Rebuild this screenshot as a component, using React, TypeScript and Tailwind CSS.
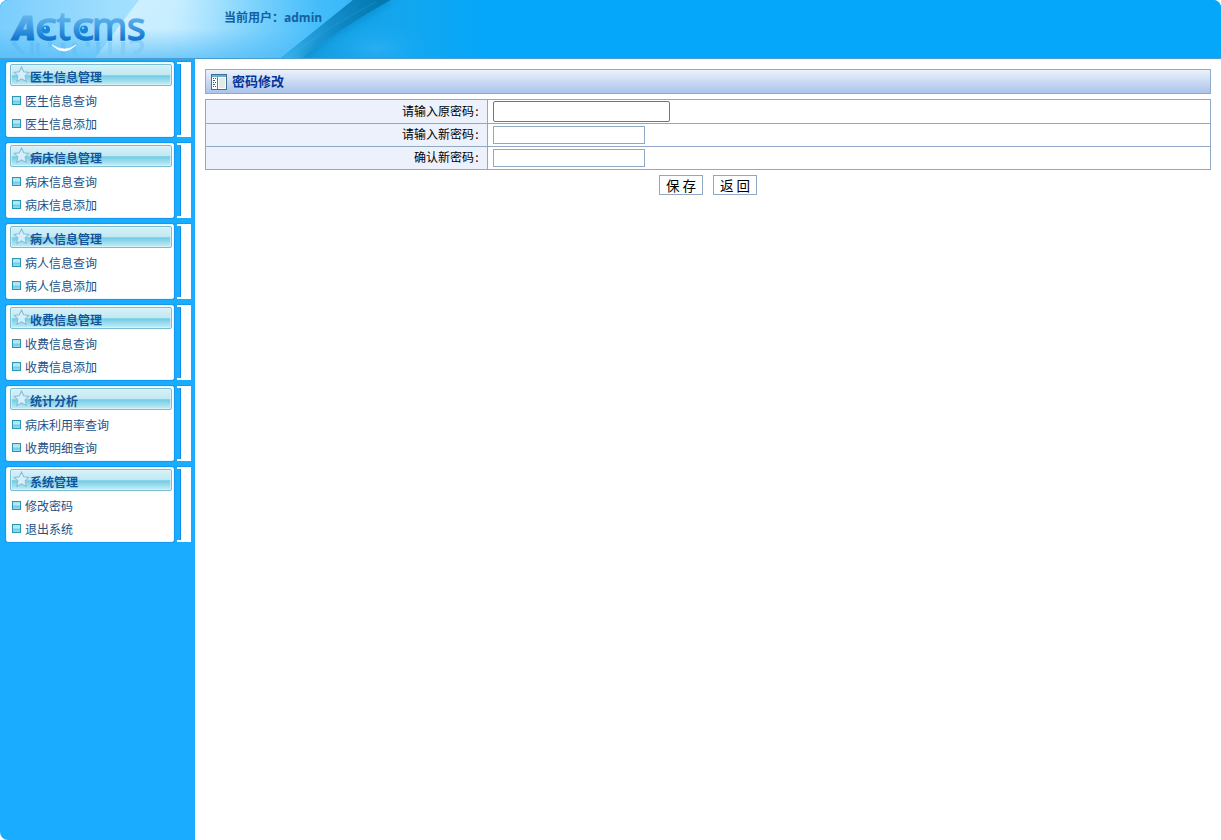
import React from "react";

const groups = [
  { title: "医生信息管理", items: ["医生信息查询", "医生信息添加"] },
  { title: "病床信息管理", items: ["病床信息查询", "病床信息添加"] },
  { title: "病人信息管理", items: ["病人信息查询", "病人信息添加"] },
  { title: "收费信息管理", items: ["收费信息查询", "收费信息添加"] },
  { title: "统计分析", items: ["病床利用率查询", "收费明细查询"] },
  { title: "系统管理", items: ["修改密码", "退出系统"] },
];

function LogoLetters() {
  return (
    <g fontFamily="Open Sans, sans-serif" fontWeight="500" fill="url(#ink)" stroke="url(#ink)" strokeWidth="1.5">
      <text x="13" y="39.5" fontSize="34" fontWeight="800" fontStyle="italic" strokeWidth=".8">A</text>
      <text x="35" y="39.5" fontSize="39" textLength="22" lengthAdjust="spacingAndGlyphs">c</text>
      <text x="57" y="39.5" fontSize="38">t</text>
      <text x="72" y="39.5" fontSize="39" textLength="22" lengthAdjust="spacingAndGlyphs">c</text>
      <text x="92" y="39.5" fontSize="38">m</text>
      <text x="127" y="39.5" fontSize="39">s</text>
    </g>
  );
}

function HeaderArt() {
  return (
    <svg className="absolute inset-0" width="1221" height="58" viewBox="0 0 1221 58" aria-hidden="true">
      <defs>
        <linearGradient id="sky" gradientUnits="userSpaceOnUse" x1="0" x2="400" y1="0" y2="0">
          <stop offset="0" stopColor="#7acdfd" />
          <stop offset=".28" stopColor="#9fdefe" />
          <stop offset=".46" stopColor="#aee4ff" />
          <stop offset=".63" stopColor="#7dd3fd" />
          <stop offset=".8" stopColor="#43bcfa" />
          <stop offset="1" stopColor="#27b1f7" />
        </linearGradient>
        <linearGradient id="floor" x1="0" x2="0" y1="0" y2="1">
          <stop offset=".5" stopColor="#4bb8f6" stopOpacity="0" />
          <stop offset="1" stopColor="#4bb8f6" stopOpacity=".65" />
        </linearGradient>
        <linearGradient id="beam" gradientUnits="userSpaceOnUse" x1="110" x2="250" y1="0" y2="35">
          <stop offset="0" stopColor="#e1f6ff" stopOpacity=".8" />
          <stop offset=".45" stopColor="#d9f4ff" stopOpacity=".6" />
          <stop offset="1" stopColor="#a0dfff" stopOpacity="0" />
        </linearGradient>
        <linearGradient id="right" gradientUnits="userSpaceOnUse" x1="300" x2="490" y1="0" y2="0">
          <stop offset="0" stopColor="#149cde" />
          <stop offset=".5" stopColor="#14a6ee" />
          <stop offset="1" stopColor="#04a7fa" />
        </linearGradient>
        <linearGradient id="fold" gradientUnits="userSpaceOnUse" x1="290" x2="375" y1="58" y2="0">
          <stop offset="0" stopColor="#32aeea" />
          <stop offset=".5" stopColor="#168fcd" />
          <stop offset="1" stopColor="#057ab3" />
        </linearGradient>
        <radialGradient id="glow">
          <stop offset="0" stopColor="#3fb7f9" stopOpacity=".5" />
          <stop offset="1" stopColor="#19adf5" stopOpacity="0" />
        </radialGradient>
        <linearGradient id="ink" gradientUnits="userSpaceOnUse" x1="0" x2="0" y1="11" y2="41">
          <stop offset="0" stopColor="#72bdf0" />
          <stop offset=".5" stopColor="#429fe4" />
          <stop offset="1" stopColor="#0970cd" />
        </linearGradient>
        <linearGradient id="fade" gradientUnits="userSpaceOnUse" x1="0" x2="0" y1="41" y2="56">
          <stop offset="0" stopColor="#2391df" stopOpacity=".2" />
          <stop offset="1" stopColor="#2391df" stopOpacity=".06" />
        </linearGradient>
        <filter id="soft" x="-20%" y="-20%" width="140%" height="140%">
          <feGaussianBlur stdDeviation="3" />
        </filter>
      </defs>
      <rect width="1221" height="58" fill="#04a7fa" />
      <path d="M0 0H355L281 58H0Z" fill="url(#sky)" />
      <path d="M139 0H275L235 58H95Z" fill="url(#beam)" />
      <rect width="340" height="58" fill="url(#floor)" />
      <path d="M353 0H560V58H281Z" fill="url(#right)" />
      <path d="M353 0H391Q350 22 302 58H281Z" fill="url(#fold)" />
      <path d="M375 1H397Q354 24 306 58H297Q335 26 375 1Z" fill="#067bb4" opacity=".35" filter="url(#soft)" />
      <path d="M376 2Q334 23 288 57" fill="none" stroke="#4bb7e9" strokeWidth=".6" opacity=".35" />
      <ellipse cx="375" cy="48" rx="60" ry="28" fill="url(#glow)" />
      <path d="M13 42L19 50L24 54M32 42V55M38 43Q36 50 40 56M50 42V47M63 43V56M75 43Q72 51 77 56M88 42V47M98 42V55M110 42V55M123 42V55M130 42Q143 38 142 47Q141 51 134 53" fill="none" stroke="url(#fade)" strokeWidth="4" />
      <LogoLetters />
      <circle cx="46" cy="29.5" r="4" fill="#1686dc" />
      <circle cx="84" cy="29.5" r="4" fill="#1686dc" />
      <circle cx="45" cy="28" r="1.2" fill="#83cdf7" />
      <circle cx="83" cy="28" r="1.2" fill="#83cdf7" />
      <path d="M52 45Q64 57 76 45Q65 53 52 45Z" fill="white" stroke="white" strokeWidth=".7" />
    </svg>
  );
}

function Star() {
  return (
    <svg className="mt-px -ml-px shrink-0" width="17" height="17" viewBox="0 0 16 16">
      <path d="M8 1L10.1 5.4L15 6L11.4 9.4L12.4 14.6L8 12.1L3.6 14.6L4.6 9.4L1 6L5.9 5.4Z" fill="#d4f0fa" stroke="#8dbbdc" strokeWidth="1" />
    </svg>
  );
}

function MenuGroup({ title, items }: { title: string; items: string[] }) {
  return (
    <section className="flex h-[75px] gap-[3px]">
      <div className="w-[168px] rounded-[2px] border border-[#e6f8ff] bg-white px-[3px] pt-px shadow-[0_0_0_1px_#1598f2]">
        <h2 className="flex h-[22px] w-[162px] rounded-[2px] border border-[#78bdd3] bg-[linear-gradient(180deg,#d7f1f7_0%,#c1e9f3_48%,#72cce6_54%,#93d9eb_72%,#c7edf5_100%)] pl-[3px] shadow-[inset_0_0_0_1px_rgba(224,247,252,.65)]">
          <Star />
          <span className="pt-[3px] text-[12px] leading-[18px] font-bold whitespace-nowrap text-[#14549a]">{title}</span>
        </h2>
        <ul className="pt-[3px]">
          {items.map((item) => (
            <li key={item} className="flex h-[23px] pl-[2px]">
              <span className="mt-[7px] mr-[4px] h-[9px] w-[9px] shrink-0 border border-[#2998b8] bg-[linear-gradient(180deg,#a5e1f0_0%,#c0edf6_48%,#65cae3_52%,#97dceb_100%)]" />
              <a className="text-[12px] leading-[23px] whitespace-nowrap text-[#1d5187]">{item}</a>
            </li>
          ))}
        </ul>
      </div>
      <div className="flex w-[14px] flex-col bg-white shadow-[0_-1px_0_#1598f2]">
        <div className="mt-[2px] mb-[2px] w-[4px] grow border-r border-[#0d8cea] bg-[#1aacff]" />
      </div>
    </section>
  );
}

function PanelIcon() {
  return (
    <svg width="16" height="16" viewBox="0 0 16 16" shapeRendering="crispEdges">
      <path d="M.5 .5H15.5V15.5H.5Z" fill="white" stroke="#3b7290" />
      <path d="M1 1H15V3H1Z" fill="#69afd0" />
      <path d="M6.5 3V15" stroke="#4c8299" />
      <path d="M8 4H14V14H8Z" fill="#e3ebe7" />
      <path d="M2 4.5H3M4 4.5H5M2 6.5H4M2 8.5H3M4 8.5H5M2 10.5H4M2 12.5H3M4 12.5H5" stroke="#32617b" />
    </svg>
  );
}

const fields = [
  { label: "请输入原密码", row: "h-[24px]", leading: "leading-[22px]", input: "h-[21px] w-[177px] rounded-[2px] border-[#767676]" },
  { label: "请输入新密码", row: "h-[23px]", leading: "leading-[20px]", input: "h-[18px] w-[152px] border-[#8fa9c4]" },
  { label: "确认新密码", row: "h-[23px]", leading: "leading-[20px]", input: "h-[18px] w-[152px] border-[#8fa9c4]" },
];

export default function App() {
  return (
    <div className="flex h-[840px] w-[1221px] flex-col overflow-hidden rounded-[8px] bg-white font-['Noto_Sans_CJK_SC',sans-serif]">
      <header className="relative h-[59px] shrink-0 border-b border-[#4f9dce] bg-[#04a7fa]">
        <HeaderArt />
        <p className="relative flex pt-[8px] pl-[224px] text-[12px] leading-[18px] font-bold text-[#14609e]">
          <span className="w-[60px] whitespace-nowrap">当前用户：</span>
          <span className="pt-px font-['Open_Sans','Noto_Sans',sans-serif] text-[12px]">admin</span>
        </p>
      </header>
      <div className="flex min-h-0 grow">
        <aside className="flex w-[195px] shrink-0 flex-col gap-[6px] bg-[#1aacff] pt-[3px] pl-[6px]">
          {groups.map((group) => <MenuGroup key={group.title} {...group} />)}
        </aside>
        <main className="grow border-t border-[#e5ffff] px-[10px] pt-[9px]">
          <div className="flex h-[25px] items-center border border-[#8fa9c7] bg-linear-to-b from-[#ecf1fb] to-[#abc4eb] pl-[5px]">
            <PanelIcon />
            <h1 className="ml-[5px] pb-[2px] text-[13px] leading-[20px] font-bold text-[#03369a]">密码修改</h1>
          </div>
          <form className="mt-[5px]">
            <div className="border-x border-t border-[#8fa9c4]">
              {fields.map((field) => (
                <div key={field.label} className={`flex border-b border-[#8fa9c4] ${field.row}`}>
                  <label className={`flex w-[282px] justify-end border-r border-[#8fa9c4] bg-[#edf1fc] pr-[7px] text-[12px] text-black ${field.leading}`}>
                    {field.label}
                    <span className="w-[6px] text-center">:</span>
                  </label>
                  <div className="flex items-center pl-[5px]">
                    <input type="password" aria-label={field.label} className={`border bg-white outline-none ${field.input}`} />
                  </div>
                </div>
              ))}
            </div>
            <div className="mt-[5px] flex justify-center gap-[10px]">
              <button type="button" className="h-[20px] w-[44px] border border-[#8fa9c4] bg-white text-[13.5px] leading-[18px] whitespace-nowrap">保 存</button>
              <button type="button" className="h-[20px] w-[44px] border border-[#8fa9c4] bg-white text-[13.5px] leading-[18px] whitespace-nowrap">返 回</button>
            </div>
          </form>
        </main>
      </div>
    </div>
  );
}
